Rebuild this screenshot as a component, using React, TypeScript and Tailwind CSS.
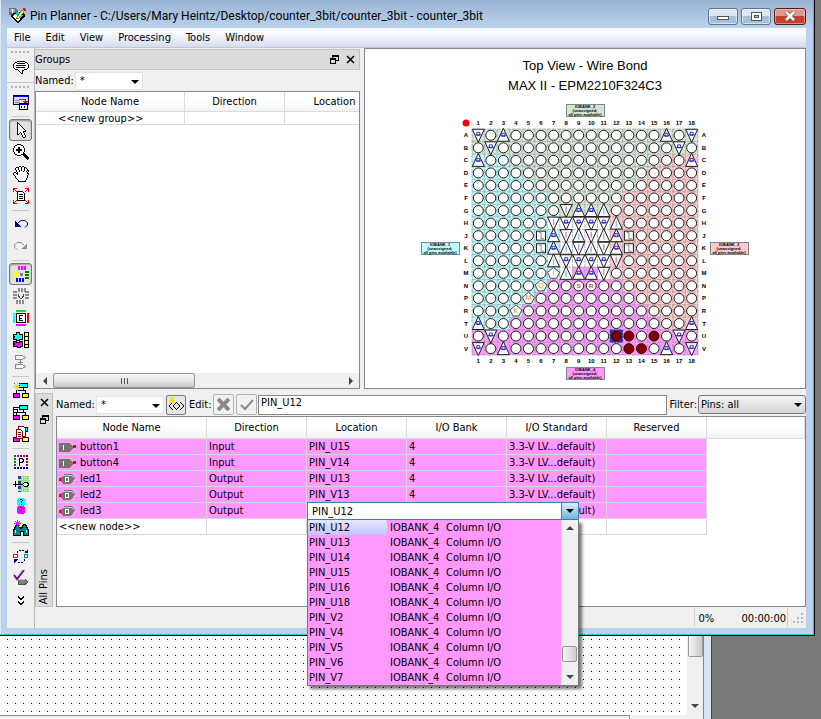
import type { ReactNode } from 'react';

const ROWS = ['A', 'B', 'C', 'D', 'E', 'F', 'G', 'H', 'J', 'K', 'L', 'M', 'N', 'P', 'R', 'T', 'U', 'V'];
const PITCH = 12.55;
const GRID_X = 107;
const GRID_Y = 80;

const BANK_FILL: Record<string, string> = {
  g: '#d3e5d3',
  c: '#bffafa',
  r: '#fcc8c8',
  m: '#ff99ff',
  w: '#ffffff',
};

// One letter per ball: the I/O bank that it belongs to
const BANKS = [
  'gggggggggggggggggg',
  'gggggggggggggggggg',
  'cccggggggggggggrrr',
  'ccccggggggggggrrrr',
  'cccccggggggggrrrrr',
  'ccccccggggggrrrrrr',
  'cccccccggggrrrrrrr',
  'ccccccwwwwwrrrrrrr',
  'cccccccwwwwrrrrrrr',
  'cccccccwwwwrrrrrrr',
  'ccccccwwwwwrrrrrrr',
  'cccccccwmmwrrrrrrr',
  'ccccccmmmmmmrrrrrr',
  'cccccmmmmmmmmrrrrr',
  'ccccmmmmmmmmmmrrrr',
  'cccmmmmmmmmmmmmrrr',
  'mmmmmmmmmmmmmmmmmm',
  'mmmmmmmmmmmmmmmmmm',
];

// o = user I/O, v/^ = ground, w/a = supply, L = clock, # = assigned, @ = selected
const BALLS = [
  'vo^oooooooooooo^ov',
  'ovoooooooooooooovo',
  '^oooooooooooooooo^',
  'oooooooooooooooooo',
  'oooooooooooooooooo',
  'oooooooooooooooooo',
  'ooooooow^^aooooooo',
  'oooooowvvvvaoooooo',
  'oooooL^wawa^Looooo',
  'oooooL^awaw^Looooo',
  'ooooooavvvvwoooooo',
  'ooooooIa^^wooooooo',
  'oooooOooSRoooooooo',
  'ooooMooooooooooooo',
  'oooKoooooooooooooo',
  '^oooooooooooooooo^',
  'ovooooooooo@#o#ovo',
  'vo^ooooooooo##o^ov',
];

function Ball({ kind, x, y }: { kind: string; x: number; y: number }) {
  const stroke = '#1c1c1c';
  if (kind === 'v' || kind === 'w') {
    return (
      <g>
        <path d={`M${x - 6} ${y - 6}H${x + 6}L${x} ${y + 7}Z`} fill="#fff" stroke={stroke} />
        {kind === 'v' ? (
          <path d={`M${x - 1.5} ${y - 3}h3v3h-3zM${x - 3} ${y - 0.5}h6`} fill="none" stroke="#2020d0" strokeWidth="0.9" />
        ) : (
          <path d={`M${x} ${y - 4}v6`} stroke="#b49ae8" strokeWidth="1.5" />
        )}
      </g>
    );
  }
  if (kind === '^' || kind === 'a') {
    return (
      <g>
        <path d={`M${x - 6} ${y + 6}H${x + 6}L${x} ${y - 7}Z`} fill="#fff" stroke={stroke} />
        {kind === '^' ? (
          <path d={`M${x - 1.5} ${y - 2}h3v3h-3zM${x - 3} ${y + 0.5}h6`} fill="none" stroke="#2020d0" strokeWidth="0.9" />
        ) : (
          <path d={`M${x} ${y - 2}v6`} stroke="#8cc4f0" strokeWidth="1.5" />
        )}
      </g>
    );
  }
  if (kind === 'L') {
    return (
      <g fill="none">
        <rect x={x - 4.5} y={y - 4.5} width="9" height="9" fill="#fff" stroke={stroke} />
        <path d={`M${x - 2} ${y - 3}h2v6h3`} stroke="#888" />
      </g>
    );
  }
  if ('IOMK'.includes(kind)) {
    return (
      <g>
        <path d={`M${x} ${y - 6}L${x + 6} ${y - 1}L${x + 3} ${y + 5}H${x - 3}L${x - 6} ${y - 1}Z`} fill="#fff" stroke="#444" />
        <text x={x} y={y + 2} fontSize="7" textAnchor="middle" fill="#d98c28">{kind}</text>
      </g>
    );
  }
  const assigned = kind === '#' || kind === '@';
  return (
    <g>
      {kind === '@' && <rect x={x - 6} y={y - 6} width="12" height="12" fill="#1f3fd0" stroke="#0a1f90" strokeDasharray="2 1" />}
      <circle cx={x} cy={y} r="5" fill={assigned ? '#7f0000' : '#fff'} stroke={assigned ? '#3c0000' : stroke} />
      {(kind === 'S' || kind === 'R') && (
        <text x={x} y={y + 2} fontSize="6" fontWeight="bold" textAnchor="middle" fill="#c04a20">{kind}</text>
      )}
    </g>
  );
}

function BankLabel({ x, y, bank, fill }: { x: number; y: number; bank: number; fill: string }) {
  return (
    <g fontSize="4" fontWeight="bold" textAnchor="middle">
      <rect x={x + 0.5} y={y + 0.5} width="38" height="12" fill={fill} stroke="#7a8a8a" />
      <text x={x + 19} y={y + 4}>IOBANK_{bank}</text>
      <text x={x + 19} y={y + 8}>(unassigned;</text>
      <text x={x + 19} y={y + 12}>all pins available)</text>
    </g>
  );
}

function ChipView() {
  const end = PITCH * 18;
  return (
    <svg viewBox="0 0 440 338" width="440" height="338" fontFamily="Liberation Sans, Arial, sans-serif" fill="#000" className="max-w-full">
      <g fontSize="13" textAnchor="middle">
        <text x="220" y="21">Top View - Wire Bond</text>
        <text x="220" y="41">MAX II - EPM2210F324C3</text>
      </g>
      <BankLabel x={201} y={55} bank={2} fill={BANK_FILL.g} />
      <BankLabel x={56} y={193} bank={1} fill={BANK_FILL.c} />
      <BankLabel x={345} y={193} bank={3} fill={BANK_FILL.r} />
      <BankLabel x={201} y={318} bank={4} fill={BANK_FILL.m} />
      <circle cx="101" cy="74" r="3.5" fill="#f00" />
      {BANKS.map((row, r) =>
        row.split('').map((b, c) => (
          <rect key={`${r}-${c}`} x={GRID_X + c * PITCH} y={GRID_Y + r * PITCH} width={PITCH + 0.2} height={PITCH + 0.2} fill={BANK_FILL[b]} />
        ))
      )}
      <g stroke="#8c8c94" strokeDasharray="4 1" strokeOpacity="0.6">
        {Array.from({ length: 19 }, (_, i) => (
          <path key={i} d={`M${GRID_X + i * PITCH} ${GRID_Y}v${end}M${GRID_X} ${GRID_Y + i * PITCH}h${end}`} />
        ))}
      </g>
      {BALLS.map((row, r) =>
        row.split('').map((kind, c) => (
          <Ball key={`${r}-${c}`} kind={kind} x={GRID_X + (c + 0.5) * PITCH} y={GRID_Y + (r + 0.5) * PITCH} />
        ))
      )}
      <g fontSize="6" fontWeight="bold" textAnchor="middle">
        {ROWS.map((name, i) => {
          const cell = (i + 0.5) * PITCH;
          return (
            <g key={name}>
              <text x={GRID_X + cell} y="76">{i + 1}</text>
              <text x={GRID_X + cell} y="314">{i + 1}</text>
              <text x="101" y={GRID_Y + cell + 2}>{name}</text>
              <text x="339" y={GRID_Y + cell + 2}>{name}</text>
            </g>
          );
        })}
      </g>
    </svg>
  );
}

function Icon({ children, size = 16 }: { children: ReactNode; size?: number }) {
  return (
    <svg width={size} height={size} viewBox="0 0 16 16" fill="none" stroke="#000" shapeRendering="crispEdges" className="shrink-0">
      {children}
    </svg>
  );
}

const PIXEL: Record<string, string> = { '#': '#000', o: '#fff' };

// Small bitmap icons, one character per pixel
function Bitmap({ rows }: { rows: string[] }) {
  return (
    <g stroke="none">
      {rows.map((row, y) =>
        row.split('').map((ch, x) => (PIXEL[ch] ? <rect key={`${x}-${y}`} x={x} y={y} width="1" height="1" fill={PIXEL[ch]} /> : null))
      )}
    </g>
  );
}

const ARROW = [
  '....#...........',
  '....##..........',
  '....#o#.........',
  '....#oo#........',
  '....#ooo#.......',
  '....#oooo#......',
  '....#ooooo#.....',
  '....#oooooo#....',
  '....#ooooooo#...',
  '....#ooooo###...',
  '....#oo#oo#.....',
  '....#o#.#oo#....',
  '....##..#oo#....',
  '.........#oo#...',
  '.........#oo#...',
  '..........##....',
];

const MAGNIFIER = [
  '....####........',
  '..##oooo##......',
  '.#oooooooo#.....',
  '.#ooo##ooo#.....',
  '#oooo##oooo#....',
  '#oo######oo#....',
  '#oo######oo#....',
  '#oooo##oooo#....',
  '.#ooo##ooo#.....',
  '.#oooooooo##....',
  '..##oooo#####...',
  '....####..####..',
  '...........####.',
  '............####',
  '.............###',
  '..............#.',
];

const HAND = [
  '......##.##.....',
  '...###oo#oo##...',
  '..#oo#oo#oo#o#..',
  '..#oo#oo#oo#oo#.',
  '...#oo#o#oo#oo##',
  '...#oo#ooo#oo#o#',
  '.##.#ooooooooo#o',
  '#oo##ooooooooo##',
  '#ooo#oooooooooo#',
  '.#oooooooooooo#.',
  '..#ooooooooooo#.',
  '..#ooooooooooo#.',
  '...#ooooooooo#..',
  '....#oooooooo#..',
  '.....#oooooo#...',
  '.....########...',
];

const BALLOON = [
  '....########....',
  '..##oooooooo##..',
  '.#oo########oo#.',
  '#oooooooooooooo#',
  '#oo##########oo#',
  '#oooooooooooooo#',
  '#oo#########ooo#',
  '.#oooooooooooo#.',
  '..###oooooo###..',
  '.....#ooo##.....',
  '......#oo#......',
  '.......#o#......',
  '........##......',
];

const hierarchy = (
  <>
    <path d="M10.500 5v4M3.500 12V8.500h9V12" />
    <rect x="6.500" y="1.500" width="8" height="4" fill="#0ff" />
    <rect x="0.500" y="11.500" width="6" height="4" fill="#f0f" />
    <rect x="9.500" y="11.500" width="6" height="4" fill="#ff0" />
  </>
);

type Tool = { label: string; icon: ReactNode; active?: boolean };

const TOOL_GROUPS: Tool[][] = [
  [
    {
      label: 'Export assignments',
      icon: (
        <>
          <rect x="0.500" y="1.500" width="15" height="9" fill="#ddd" />
          <path d="M1 2.500h14" stroke="#00f" />
          <path d="M2 8.500h5M2 6.500h4" stroke="#888" />
          <path d="M6 5.500h6v3M10 7h5M11 8h3" stroke="#f00" />
          <rect x="6.500" y="9.500" width="8" height="6" fill="#fff" />
          <path d="M7 10.500h7" stroke="#00f" />
          <path d="M8.500 12v2M11.500 12v2" />
        </>
      ),
    },
  ],
  [
    { label: 'Select', active: true, icon: <Bitmap rows={ARROW} /> },
    { label: 'Zoom', icon: <Bitmap rows={MAGNIFIER} /> },
    { label: 'Pan', icon: <Bitmap rows={HAND} /> },
    {
      label: 'Fit in window',
      icon: (
        <>
          <path d="M0 .5h4M.5 0v4M12 .5h4M15.500 0v4M0 15.500h4M.5 12v4M12 15.500h4M15.500 12v4" stroke="#f00" />
          <path d="M1 1l3 3M15 1l-3 3M1 15l3-3M15 15l-3-3" stroke="#f00" shapeRendering="auto" />
          <path d="M4.500 3.500h5l2 2v7h-7z" fill="#fff" />
          <path d="M6 6.500h4M6 8.500h4M6 10.500h4" />
        </>
      ),
    },
  ],
  [
    {
      label: 'Undo',
      icon: (
        <>
          <path d="M5 7l3-2.500h4L14.500 7v2L12 11.500" stroke="#000080" shapeRendering="auto" />
          <path d="M2 5v6h6z" fill="#000080" stroke="none" />
        </>
      ),
    },
    {
      label: 'Redo',
      icon: (
        <>
          <path d="M11 7L8 4.500H4L1.500 7v2L4 11.500" stroke="#909090" shapeRendering="auto" />
          <path d="M14 5v6H8z" fill="#909090" stroke="none" />
        </>
      ),
    },
  ],
  [
    {
      label: 'Show I/O banks',
      active: true,
      icon: (
        <>
          <path d="M6 0v4M9 0v4M12 0v4" stroke="#f0f" strokeWidth="2" />
          <path d="M0 6h4M0 9h4M0 12h4" stroke="#ff0" strokeWidth="2" />
          <path d="M12 6h4M12 9h4M12 12h4" stroke="#008000" strokeWidth="2" />
          <path d="M4 12v4M7 12v4M10 12v4" stroke="#00f" strokeWidth="2" />
          <rect x="7" y="7" width="3" height="3" fill="#808080" stroke="none" />
        </>
      ),
    },
    {
      label: 'Show VREF groups',
      icon: (
        <>
          <path d="M6 0v4M9 0v4M12 0v4M0 4h4M0 7h4M0 10h4M12 4h4M12 7h4M12 10h4M4 12v4M7 12v4M10 12v4" stroke="#8c8c8c" strokeWidth="2" />
          <path d="M5.500 6v2l2.500 3 2.500-3V6" stroke="#444" />
        </>
      ),
    },
    {
      label: 'Show edges',
      icon: (
        <>
          <path d="M3 1h10" stroke="#0e0" strokeWidth="2" />
          <path d="M3 15h10" stroke="#f0f" strokeWidth="2" />
          <path d="M1 3v10" stroke="#0ff" strokeWidth="2" />
          <path d="M15 3v10" stroke="#f00" strokeWidth="2" />
          <rect x="3.500" y="3.500" width="9" height="9" fill="#fff" />
          <path d="M10 5.500H6.500v5H10M6.500 8.500H9" />
        </>
      ),
    },
    {
      label: 'Show differential pairs',
      icon: (
        <>
          <path d="M.5 2.500h3v-2h3v2h3v5h-3v1h-3v-1h-3v-2h1v-1h-1z" fill="#0ff" />
          <path d="M.5 9.500h3v1h3v-1h3v5h-2v1h-3v-1h-4v-2h1v-1h-1z" fill="#f0f" />
          <path d="M11.500.5h4v15h-4zM11.500 4.500h4M11.500 8.500h4M11.500 12.500h4" fill="#ff0" />
        </>
      ),
    },
    {
      label: 'Pin pairs',
      icon: <path d="M2.500 1.500h7l3 2-3 2h-7zM2.500 10.500h7l3 2-3 2h-7zM7.500 5.500v5M5 8.500h5" stroke="#888" fill="#f4f4f4" />,
    },
  ],
  [
    {
      label: 'New assignment',
      icon: (
        <>
          {hierarchy}
          <path d="M1 1l7 7M8 1L1 8" stroke="#555" strokeDasharray="1 1" />
          <path d="M4.500 0v9M0 4.500h9M2 2l5 5M7 2L2 7" stroke="#e8d800" />
        </>
      ),
    },
    {
      label: 'Node hierarchy',
      icon: (
        <>
          {hierarchy}
          <path d="M.5 11V3.500h6" />
          <rect x=".5" y="5.500" width="4" height="3" fill="#fff" />
        </>
      ),
    },
    {
      label: 'Node report',
      icon: (
        <>
          {hierarchy}
          <path d="M5.500.5h5l2 2v8h-7z" fill="#fff" stroke="#800000" />
          <path d="M3.500 3.500h4l2 2v7h-6z" fill="#fff" stroke="#800000" />
          <path d="M5 6.500h3M5 8.500h3M5 10.500h3" stroke="#800000" />
        </>
      ),
    },
  ],
  [
    {
      label: 'Pin legend',
      icon: (
        <>
          <path d="M1 2h14" stroke="#b000b0" strokeWidth="2" strokeDasharray="2 1" />
          <path d="M14 1v14" stroke="#b00000" strokeWidth="2" strokeDasharray="2 1" />
          <path d="M2 1v14" stroke="#008000" strokeWidth="2" strokeDasharray="2 1" />
          <path d="M1 14h14" stroke="#0000c0" strokeWidth="2" strokeDasharray="2 1" />
          <path d="M6.500 12V4.500H9l1 1v2l-1 1H7" />
        </>
      ),
    },
    {
      label: 'Pad view',
      icon: (
        <>
          <path d="M5 0h11v16H5z" fill="#7de87d" stroke="none" />
          <path d="M5 1.500h11M5 3.500h11M5 5.500h11M5 10.500h11M5 12.500h11M5 14.500h11" stroke="#c8f5c8" strokeDasharray="1 1" />
          <path d="M6.500 0v16" stroke="#4030a0" strokeWidth="3" strokeDasharray="3 2" />
          <path d="M0 8.500h10M2.500 5v6" />
          <path d="M9.500 8.500l2-2h3l1 2-1 2h-3z" fill="#fff" />
        </>
      ),
    },
    {
      label: 'Pin finder',
      icon: (
        <>
          <circle cx="8" cy="4" r="4.500" fill="#0ff" stroke="none" />
          <circle cx="8" cy="12" r="4.500" fill="#f0f" stroke="none" />
          <path d="M6.500 2.500l1-1h1l1 1-1.500 1.500v1M8 6v1" />
          <path d="M6.500 10.500l1-1h1l1 1-1.500 1.500v1M8 14v1" stroke="#606" />
        </>
      ),
    },
    {
      label: 'Find',
      icon: (
        <>
          <path d="M.5 15.500v-5l3-6h2l2 4h1l2-4h2l3 6v5h-5v-4h-3v4z" fill="#088" />
          <path d="M2.500 13v-3M13.500 13v-3" stroke="#8ff" />
          <path d="M2 1l5 5M7 1L2 6M4.500 0v7M1 3.500h7" stroke="#f0f" />
          <path d="M6 2.500h2M6 6.500h2M1 1.500h1" stroke="#ff0" />
        </>
      ),
    },
  ],
  [
    {
      label: 'Swap pins',
      icon: (
        <>
          <path d="M4 4.500l2-2.500h5l2 2M12 11.500L10 14H5l-2-2" stroke="#000080" strokeDasharray="2 1" />
          <path d="M11 5h4V1zM1 11h4l-4 4z" fill="#000080" stroke="none" />
          <circle cx="2.500" cy="8" r="2" stroke="#f00" fill="#fff" />
          <circle cx="13" cy="8" r="2" stroke="#088" fill="#fff" />
        </>
      ),
    },
    {
      label: 'Check assignments',
      icon: (
        <>
          <path d="M1 5l3 4L11 0" stroke="#70107a" strokeWidth="2" shapeRendering="auto" />
          <path d="M5 9.500h7l3 2.500-3 2.500H5z" fill="#808080" stroke="#555" />
          <path d="M5 9.500h7" stroke="#ccc" />
        </>
      ),
    },
    {
      label: 'More tools',
      icon: <path d="M5 4l3 3 3-3M5 5l3 3 3-3M5 9l3 3 3-3M5 10l3 3 3-3" shapeRendering="auto" />,
    },
  ],
];

function Grip() {
  return (
    <div className="h-2 flex items-center justify-center">
      <div className="w-5 h-[2px] bg-[repeating-linear-gradient(90deg,#b4b4b4_0_2px,transparent_2px_4px)]" />
    </div>
  );
}

function ToolButton({ tool }: { tool: Tool }) {
  return (
    <button
      aria-label={tool.label}
      className={`h-[22px] w-[23px] mx-auto flex items-center justify-center rounded-[3px] ${
        tool.active ? 'border border-[#777] bg-[#e2e2e2] shadow-[inset_0_1px_2px_#999]' : ''
      }`}
    >
      <Icon>{tool.icon}</Icon>
    </button>
  );
}

function Toolbar() {
  return (
    <div className="w-[27px] shrink-0 flex flex-col bg-[#f0f0f0]">
      <Grip />
      <ToolButton tool={{ label: 'Messages', icon: <Bitmap rows={['', '', ...BALLOON]} /> }} />
      <div className="h-px mt-1 bg-[#c4c4c4]" />
      <Grip />
      {TOOL_GROUPS.map((group, i) => (
        <div key={i} className="flex flex-col">
          {i > 0 && <div className="h-px mt-[3px] mb-[2px] mx-[5px] bg-[#c8c8c8]" />}
          {group.map((tool) => (
            <ToolButton key={tool.label} tool={tool} />
          ))}
        </div>
      ))}
    </div>
  );
}

function Triangle({ dir = 'down', className = '' }: { dir?: 'down' | 'up' | 'left' | 'right'; className?: string }) {
  const path = {
    down: 'M0 2h8L4 6z',
    up: 'M0 6h8L4 2z',
    left: 'M6 0v8L2 4z',
    right: 'M2 0v8l4-4z',
  }[dir];
  return (
    <svg width="8" height="8" viewBox="0 0 8 8" className={`pointer-events-none ${className}`}>
      <path d={path} fill="currentColor" />
    </svg>
  );
}

function Restore() {
  return (
    <svg width="9" height="9" viewBox="0 0 9 9" fill="none" stroke="#000" shapeRendering="crispEdges">
      <path d="M2.500 3V.5h6v5H6M2 1.500h7" />
      <path d="M.5 3.500h5v5h-5zM0 4.500h6" />
    </svg>
  );
}

function Close() {
  return (
    <svg width="9" height="9" viewBox="0 0 9 9" stroke="#000" strokeWidth="1.500">
      <path d="M1 1l7 7M8 1L1 8" />
    </svg>
  );
}

function NamedSelect({ id }: { id: string }) {
  return (
    <div className="relative w-[68px] h-[18px]">
      <select id={id} className="appearance-none w-full h-full bg-white border border-[#e3e3e3] pl-1 leading-none">
        <option>*</option>
      </select>
      <Triangle className="absolute right-1 top-[6px]" />
    </div>
  );
}

const headCell =
  'font-normal text-center border-r border-b border-[#dcdcdc] bg-linear-to-b from-white from-50% to-[#f1f2f4] p-0';

function GroupsPanel() {
  return (
    <section className="w-[325px] shrink-0 flex flex-col">
      <div className="h-[21px] mt-px flex items-center gap-[7px] pr-1 bg-[#dcdcdc] border-y border-r border-[#c3c3c3]">
        <h2 className="flex-1">Groups</h2>
        <button aria-label="Float Groups"><Restore /></button>
        <button aria-label="Close Groups"><Close /></button>
      </div>
      <div className="h-[21px] flex items-center gap-px">
        <label htmlFor="groups-named">Named:</label>
        <NamedSelect id="groups-named" />
      </div>
      <div className="flex-1 flex flex-col bg-white border border-[#828790] overflow-hidden">
        <div className="flex-1 overflow-hidden">
          <table className="table-fixed border-separate border-spacing-0 w-[349px]">
            <colgroup>
              <col className="w-[149px]" />
              <col className="w-[100px]" />
              <col className="w-[100px]" />
            </colgroup>
            <thead>
              <tr className="h-5">
                <th className={headCell}>Node Name</th>
                <th className={headCell}>Direction</th>
                <th className={headCell}>Location</th>
              </tr>
            </thead>
            <tbody>
              <tr>
                <td className="p-0 border-r border-b border-[#dcdcdc]">
                  <div className="h-3 pl-[22px] overflow-hidden leading-[14px]">&lt;&lt;new group&gt;&gt;</div>
                </td>
                <td className="p-0 border-r border-b border-[#dcdcdc]" />
                <td className="p-0 border-r border-b border-[#dcdcdc]" />
              </tr>
            </tbody>
          </table>
        </div>
        <div className="h-[15px] flex items-center bg-[#f0f0f0] text-[#444]">
          <button aria-label="Scroll left" className="w-[17px] flex justify-center"><Triangle dir="left" /></button>
          <div className="flex-1 h-full">
            <div className="w-[142px] h-full flex items-center justify-center gap-px border border-[#979797] rounded-[2px] bg-linear-to-b from-[#f4f4f4] via-[#e6e6e6] to-[#c9c9cb]">
              <i className="w-px h-[6px] bg-[#555] mr-px" />
              <i className="w-px h-[6px] bg-[#555] mr-px" />
              <i className="w-px h-[6px] bg-[#555]" />
            </div>
          </div>
          <button aria-label="Scroll right" className="w-[17px] flex justify-center"><Triangle dir="right" /></button>
        </div>
      </div>
    </section>
  );
}

const NODES = [
  { name: 'button1', direction: 'Input', location: 'PIN_U15' },
  { name: 'button4', direction: 'Input', location: 'PIN_V14' },
  { name: 'led1', direction: 'Output', location: 'PIN_U13' },
  { name: 'led2', direction: 'Output', location: 'PIN_V13' },
  { name: 'led3', direction: 'Output', location: 'PIN_U12' },
];

const LOCATIONS = ['PIN_U12', 'PIN_U13', 'PIN_U14', 'PIN_U15', 'PIN_U16', 'PIN_U18', 'PIN_V2', 'PIN_V4', 'PIN_V5', 'PIN_V6', 'PIN_V7'];

function PinIcon({ output }: { output: boolean }) {
  return (
    <svg width="17" height="10" viewBox="0 0 17 10" shapeRendering="crispEdges" className="shrink-0">
      {output ? (
        <>
          <path d="M0 4h2v3H0z" fill="#f00" />
          <path d="M2 3l3-3h7l4 4-4 6H4L2 7z" fill="#737373" />
          <path d="M2 3l3-2h7l3 3" fill="none" stroke="#c4c4c4" />
          <path d="M6 3h4v5H6zM7 4v3h2V4z" fill="#fff" fillRule="evenodd" />
        </>
      ) : (
        <>
          <path d="M0 0h11l4 4v1l-4 5H0z" fill="#737373" />
          <path d="M0 .5h11l3 3" fill="none" stroke="#c4c4c4" />
          <path d="M4.500 3v5" stroke="#fff" />
          <path d="M14 3h3v3h-3z" fill="#f00" />
        </>
      )}
    </svg>
  );
}

function LocationEditor() {
  return (
    <div className="absolute z-20 left-0 -top-px w-[272px]">
      <div className="h-[18px] flex bg-white border border-[#3c7fb1]">
        <input aria-label="Location" role="combobox" aria-expanded="true" aria-controls="locations" defaultValue="PIN_U12" className="flex-1 min-w-0 pl-1 outline-none" />
        <button aria-label="Show locations" className="w-[17px] flex items-center justify-center border-l border-[#3c7fb1] bg-linear-to-b from-[#d8effa] to-[#6fb5dc]">
          <Triangle />
        </button>
      </div>
      <div className="h-[166px] flex bg-[#ff99ff] border border-t-0 border-[#777] shadow-[3px_3px_3px_#0008]">
        <ul id="locations" role="listbox" className="flex-1">
          {LOCATIONS.map((pin, i) => (
            <li key={pin} role="option" aria-selected={i === 0} className="h-[15px] leading-[15px] flex whitespace-pre">
              <span className={`w-[79px] mr-[3px] pl-px ${i === 0 ? 'bg-linear-to-b from-[#e6e6ff] to-[#c4c4fa] rounded-[2px]' : ''}`}>{pin}</span>
              <span className="w-[56px]">IOBANK_4</span>
              <span>Column I/O</span>
            </li>
          ))}
        </ul>
        <div className="w-[17px] flex flex-col items-center justify-between py-1 bg-[#f0f0f0] text-[#444]">
          <Triangle dir="up" />
          <div className="flex-1 flex flex-col justify-end pb-[11px]">
            <div className="w-[15px] h-4 rounded-[2px] border border-[#979797] bg-linear-to-r from-[#f5f5f5] to-[#cfcfcf]" />
          </div>
          <Triangle />
        </div>
      </div>
    </div>
  );
}

const cell = 'p-0 pl-[2px] border-r border-b border-[#d8d8d8] whitespace-nowrap';

function AllPinsPanel() {
  return (
    <section className="h-[214px] shrink-0 flex">
      <div className="w-[18px] shrink-0 flex flex-col items-center gap-2 pt-1 pb-[2px] bg-[#dcdcdc] border border-[#c0c0c0]">
        <button aria-label="Close All Pins"><Close /></button>
        <button aria-label="Float All Pins"><Restore /></button>
        <h2 className="mt-auto [writing-mode:vertical-rl] rotate-180">All Pins</h2>
      </div>
      <div className="flex-1 min-w-0 ml-[3px] flex flex-col">
        <div className="h-[23px] flex items-center">
          <label htmlFor="pins-named" className="w-10">Named:</label>
          <NamedSelect id="pins-named" />
          <button aria-label="Node finder" className="ml-[2px] size-5 flex items-center justify-center rounded-[2px] border border-[#777] bg-[#e6e6e6]">
            <Icon>
              <path d="M5 5l-4 4 4 4M9 5L5 9l4 4M8 5l4 4-4 4M12 5l4 4-4 4" shapeRendering="auto" />
              <path d="M1 0l6 6M7 0L1 6M4.500 0v6M1 3.500h6" stroke="#f0e000" />
            </Icon>
          </button>
          <label htmlFor="edit" className="ml-[3px] w-6">Edit:</label>
          <button aria-label="Discard edit" className="size-[21px] flex items-center justify-center rounded-[2px] border border-[#b4b4b4] bg-[#f2f2f2]">
            <svg width="13" height="13" viewBox="0 0 13 13" stroke="#8a8a8a" strokeWidth="4"><path d="M1 1l11 11M12 1L1 12" /></svg>
          </button>
          <button aria-label="Apply edit" className="ml-[2px] size-[21px] flex items-center justify-center rounded-[2px] border border-[#b4b4b4] bg-[#f2f2f2]">
            <svg width="14" height="13" viewBox="0 0 14 13" fill="none" stroke="#8a8a8a" strokeWidth="2"><path d="M1 7l4 4 8-9" /></svg>
          </button>
          <input id="edit" defaultValue="PIN_U12" className="flex-1 min-w-0 h-5 ml-px pl-[2px] pb-1 bg-white border border-[#828790] outline-none" />
          <label htmlFor="filter" className="ml-[2px]">Filter:</label>
          <div className="relative w-[108px] h-[19px] ml-px">
            <select id="filter" className="appearance-none w-full h-full pl-[2px] rounded-[3px] border border-[#777] bg-linear-to-b from-[#f4f4f4] to-[#d6d6d6]">
              <option>Pins: all</option>
            </select>
            <Triangle className="absolute right-1 top-[6px]" />
          </div>
        </div>
        <div className="flex-1 bg-white border border-[#828790]">
          <table className="table-fixed border-separate border-spacing-0 w-full">
            <colgroup>
              <col className="w-[150px]" />
              <col className="w-[100px]" />
              <col className="w-[100px]" />
              <col className="w-[100px]" />
              <col className="w-[100px]" />
              <col className="w-[100px]" />
              <col />
            </colgroup>
            <thead>
              <tr className="h-[22px]">
                {['Node Name', 'Direction', 'Location', 'I/O Bank', 'I/O Standard', 'Reserved', ''].map((h) => (
                  <th key={h} className={headCell}>{h}</th>
                ))}
              </tr>
            </thead>
            <tbody>
              {NODES.map((n, i) => (
                <tr key={n.name} className="h-4 leading-[15px] [&>td:not(:last-child)]:bg-[#ff99ff]">
                  <td className={cell}>
                    <span className="flex items-center gap-1">
                      <PinIcon output={n.direction === 'Output'} />
                      {n.name}
                    </span>
                  </td>
                  <td className={cell}>{n.direction}</td>
                  <td className={`${cell} relative`}>
                    {i === NODES.length - 1 ? <LocationEditor /> : n.location}
                  </td>
                  <td className={cell}>{i === NODES.length - 1 ? '' : '4'}</td>
                  <td className={cell}>3.3-V LV...default)</td>
                  <td className={cell} />
                  <td className="p-0" />
                </tr>
              ))}
              <tr className="h-4 leading-[15px]">
                <td className={cell}>&lt;&lt;new node&gt;&gt;</td>
                <td className={cell} />
                <td className={cell} />
                <td className={cell} />
                <td className={cell} />
                <td className={cell} />
                <td className="p-0" />
              </tr>
            </tbody>
          </table>
        </div>
      </div>
    </section>
  );
}

function TitleBar() {
  return (
    <header className="h-7 shrink-0 flex items-center gap-1 pl-[2px] pt-1">
      <svg width="17" height="16" viewBox="0 0 17 16" shapeRendering="crispEdges">
        <path d="M0 0h6l3 3v4H0z" fill="#707070" />
        <path d="M1 1h5v3H1z" fill="#a8a8a8" />
        <path d="M3 1h1v4H3z" fill="#fff" />
        <path d="M1 8l4-3 10-1 1 4-7 8z" fill="#000" />
        <path d="M3 8l5-3 6 2-5 7z" fill="#0cf" />
        <path d="M4 8l3-2 4 5-2 3zM10 6l3 1-2 3z" fill="#fff" />
        <path d="M8 9l5-7 2 2-5 6-3 1z" fill="#ff0" stroke="#222" strokeWidth="0.500" />
        <path d="M13 1l2-1 2 2-1 1z" fill="#f00" />
      </svg>
      <h1 className="flex-1 text-[12px] font-[Roboto,sans-serif]">
        Pin Planner - C:/Users/Mary Heintz/Desktop/counter_3bit/counter_3bit - counter_3bit
      </h1>
      <div className="flex gap-[3px]">
        <button aria-label="Minimize" className="w-[30px] h-[17px] flex items-center justify-center rounded-[3px] border border-[#5d7591] bg-linear-to-b from-[#dbe6f2] from-50% to-[#a9bfd9] to-50% shadow-[inset_0_0_0_1px_#fff8]">
          <span className="w-3 h-1 mt-1 bg-white border border-[#555]" />
        </button>
        <button aria-label="Maximize" className="w-[30px] h-[17px] flex items-center justify-center rounded-[3px] border border-[#5d7591] bg-linear-to-b from-[#dbe6f2] from-50% to-[#a9bfd9] to-50% shadow-[inset_0_0_0_1px_#fff8]">
          <span className="w-[11px] h-[9px] p-[2px] bg-white border border-[#555]">
            <span className="block w-full h-full border border-[#555] bg-[#a9bfd9]" />
          </span>
        </button>
        <button aria-label="Close" className="w-8 h-[17px] flex items-center justify-center rounded-[3px] border border-[#5a1a14] bg-linear-to-b from-[#e0988c] from-50% to-[#c2402c] to-50% shadow-[inset_0_0_0_1px_#fff6]">
          <svg width="12" height="10" viewBox="0 0 12 10">
            <path d="M2 1l8 8M10 1L2 9" stroke="#555" strokeWidth="4" />
            <path d="M2 1l8 8M10 1L2 9" stroke="#fff" strokeWidth="2.500" />
          </svg>
        </button>
      </div>
    </header>
  );
}

function PinPlannerWindow() {
  return (
    <main className="relative z-10 flex-1 mr-[6px] flex flex-col border-r border-b border-black">
      <div className="flex-1 flex flex-col pl-[6px] pr-[7px] pb-[6px] border-l border-r border-b border-l-[#dce8f5] border-r-[#2fc3e6] border-b-[#2fc3e6] bg-linear-to-b from-[#9ab3d3] to-[#bad2ec] to-[28px]">
        <TitleBar />
        <nav className="h-[19px] shrink-0 flex items-center gap-[15px] pl-[7px] pt-px bg-linear-to-b from-[#f8f9fd] from-30% to-[#d5dcef]">
          {['File', 'Edit', 'View', 'Processing', 'Tools', 'Window'].map((item) => (
            <button key={item}>{item}</button>
          ))}
        </nav>
        <div className="flex-1 flex bg-[#f0f0f0] border-t border-[#c4c8d0]">
          <Toolbar />
          <div className="flex-1 min-w-0 flex flex-col border-l border-[#b8b8b8]">
            <div className="flex-1 flex gap-1 mb-1">
              <GroupsPanel />
              <section aria-label="Package view" className="flex-1 min-w-0 flex justify-center items-start bg-white border border-[#828790]">
                <ChipView />
              </section>
            </div>
            <AllPinsPanel />
            <footer className="h-[21px] shrink-0 flex items-center justify-end">
              <span className="w-[48px] h-[19px] pl-1 pt-1 border-l border-[#d0d0d0]">0%</span>
              <span className="h-[19px] pr-px pt-1 border-r border-[#d0d0d0]">00:00:00</span>
              <svg width="18" height="14" viewBox="0 0 18 14" fill="#b8b8b8">
                <path d="M13 2h2v2h-2zM13 6h2v2h-2zM9 6h2v2H9zM13 10h2v2h-2zM9 10h2v2H9zM5 10h2v2H5z" />
              </svg>
            </footer>
          </div>
        </div>
      </div>
    </main>
  );
}

function SchematicWindow() {
  return (
    <div className="h-[83px] shrink-0 w-[calc(100%-109px)] flex border-r border-[#3c4650] bg-[#d8e5f3]">
      <div className="flex-1 flex flex-col">
        <div className="flex-1 bg-white bg-[conic-gradient(from_270deg_at_1px_1px,#000_25%,#fff_0)] bg-[length:8px_8px] bg-[position:7px_3px]" />
        <div className="h-1 bg-[#f0f0f0]">
          <div className="w-[630px] max-w-full h-full border-t border-r border-[#8c8c8c] bg-[#f4f4f4]" />
        </div>
      </div>
      <div className="w-4 flex flex-col items-center justify-between bg-[#f0f0f0] pb-[9px] text-[#444]">
        <div className="w-[15px] h-[21px] border border-t-0 border-[#979797] rounded-b-[2px] bg-linear-to-r from-[#f5f5f5] to-[#c9c9cb]" />
        <Triangle />
      </div>
      <div className="w-2 border-l border-[#828790]" />
    </div>
  );
}

export default function App() {
  return (
    <div className="min-h-screen flex flex-col bg-[#787878] text-black text-[11px] leading-[14px] font-['DejaVu_Sans_Condensed','DejaVu_Sans',sans-serif]">
      <PinPlannerWindow />
      <SchematicWindow />
    </div>
  );
}
